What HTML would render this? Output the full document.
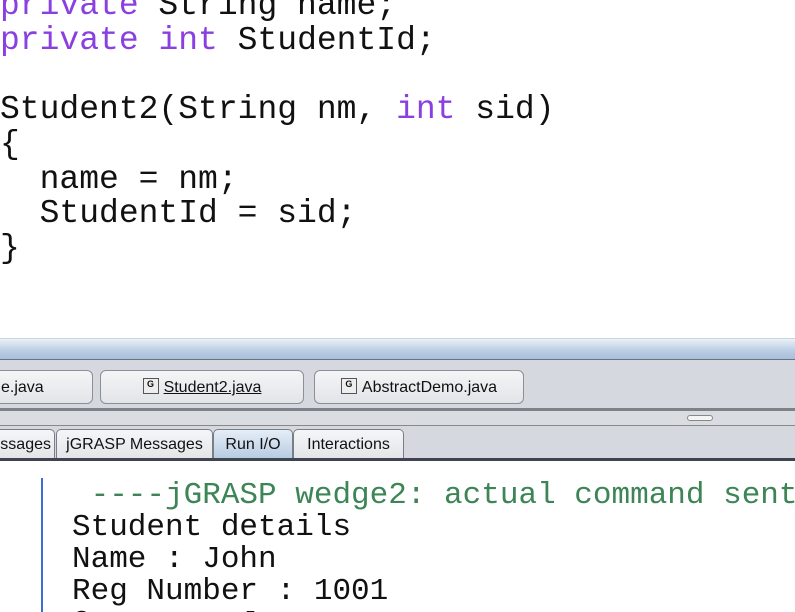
<!DOCTYPE html>
<html><head><meta charset="utf-8"><style>
html,body{margin:0;padding:0;width:795px;height:612px;overflow:hidden;background:#fff;position:relative;font-family:"Liberation Sans",sans-serif}
.code{position:absolute;left:0;top:-11px;font-family:"Liberation Mono",monospace;font-size:33px;line-height:34.7px;color:#111;white-space:pre;letter-spacing:0}
.k{color:#8a3fe0}
.bar{position:absolute;left:0;width:795px}
.tab{position:absolute;top:370px;height:34px;border:1px solid #8c8f95;border-radius:6px;background:linear-gradient(#f4f5f7,#e2e4e8);font-size:16px;line-height:34px;color:#111;box-sizing:border-box;padding-left:0}
.ic{display:inline-block;width:16px;height:16px;border:1px solid #555;background:#eee;font-size:9px;line-height:11px;text-align:center;vertical-align:middle;margin-right:5px;font-weight:bold;box-sizing:border-box;position:relative;top:-2px}
.t2{position:absolute;top:429px;height:29px;border:1px solid #7a7d83;border-bottom:none;border-radius:5px 5px 0 0;background:linear-gradient(#f5f6f8,#e3e5e9);font-size:16px;line-height:29px;color:#111;box-sizing:border-box;text-align:center}
.con{position:absolute;left:72px;top:480px;font-family:"Liberation Mono",monospace;font-size:31px;line-height:32px;color:#111;white-space:pre}
</style></head><body>
<div class="code"><span class="k">private</span> String name;
<span class="k">private</span> <span class="k">int</span> StudentId;

Student2(String nm, <span class="k">int</span> sid)
{
  name = nm;
  StudentId = sid;
}</div>

<div class="bar" style="top:338px;height:20px;background:linear-gradient(#eaf0f7,#b9cde3 60%,#a9c0da);border-top:1px solid #c9d6e4;border-bottom:2px solid #6c7480"></div>
<div class="bar" style="top:360px;height:50px;background:#d5d8de"></div>
<div class="bar" style="top:408px;height:3px;background:#7d8188"></div>
<div class="bar" style="top:411px;height:14px;background:#d9dce1;border-bottom:1px solid #888"></div>
<div style="position:absolute;left:687px;top:415px;width:24px;height:4px;border:1px solid #888;border-radius:3px;background:#f4f4f4"></div>
<div class="bar" style="top:426px;height:33px;background:#d5d8de"></div>
<div class="bar" style="top:458px;height:3px;background:#3f4550"></div>

<div class="tab" style="left:-20px;width:113px;padding-left:20px">e.java</div>
<div class="tab" style="left:100px;width:204px;text-align:center"><span class="ic">G</span><span style="text-decoration:underline">Student2.java</span></div>
<div class="tab" style="left:314px;width:210px;text-align:center"><span class="ic">G</span>AbstractDemo.java</div>

<div class="t2" style="left:-20px;width:75px;text-align:right;padding-right:3px">ssages</div>
<div class="t2" style="left:56px;width:157px">jGRASP Messages</div>
<div class="t2" style="left:213px;width:80px;background:linear-gradient(#e6eef7,#b8cce2)">Run I/O</div>
<div class="t2" style="left:293px;width:111px">Interactions</div>

<div style="position:absolute;left:41px;top:478px;width:2px;height:134px;background:#3a6fd8"></div>
<div class="con"><span style="color:#3d8456"> ----jGRASP wedge2: actual command sent</span>
Student details
Name : John
Reg Number : 1001
Course : Java</div>
</body></html>
